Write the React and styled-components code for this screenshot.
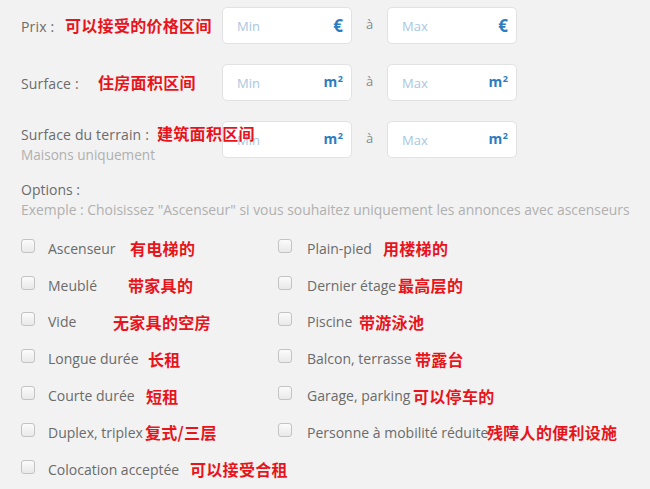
import React from 'react'
import styled, { createGlobalStyle } from 'styled-components'

const GlobalStyle = createGlobalStyle`
  html, body {
    margin: 0;
    background: #f2f2f2;
  }
  body {
    font-family: 'Open Sans', 'Noto Sans', sans-serif;
    color: #6b6b6b;
  }
`

const Form = styled.div`
  padding: 7px 0 0 21px;
  width: 629px;
  height: 482px;
  overflow: hidden;
`

const RangeList = styled.div`
  display: flex;
  flex-direction: column;
  row-gap: 20px;
`

const RangeRow = styled.div`
  display: flex;
  align-items: ${p => (p.$top ? 'flex-start' : 'center')};
  height: 37px;
`

const LabelBlock = styled.div`
  width: 201px;
  flex: none;
  margin-top: ${p => (p.$top ? '2px' : '0')};
  line-height: 20px;
`

const LabelLine = styled.div`
  display: flex;
  align-items: baseline;
  white-space: nowrap;
`

const LabelText = styled.span`
  display: inline-block;
  flex: none;
  width: ${p => p.$w}px;
  font-size: 14px;
  letter-spacing: 0.15px;
  color: #6b6b6b;
`

const Hint = styled.div`
  font-size: 13.6px;
  color: #b0b0b0;
  white-space: nowrap;
`

const Note = styled.span`
  position: relative;
  z-index: 1;
  flex: none;
  font-family: 'Noto Sans CJK SC', sans-serif;
  font-weight: 700;
  font-size: 16px;
  letter-spacing: 0.3px;
  color: #e8141c;
  white-space: nowrap;
`

const Field = styled.div`
  flex: none;
  align-self: center;
  display: flex;
  align-items: center;
  justify-content: space-between;
  padding: 0 8px 0 14px;
  box-sizing: border-box;
  width: 130px;
  height: 37px;
  background: #fff;
  border: 1px solid #e2e2e2;
  border-radius: 5px;
`

const Placeholder = styled.span`
  font-size: 13px;
  color: #a9c6e3;
`

const Unit = styled.span`
  font-weight: 700;
  font-size: ${p => (p.$euro ? '17px' : '14px')};
  color: #2b7cc0;
  margin-top: ${p => (p.$euro ? '-1px' : '-3px')};
  sup {
    font-size: 9px;
    vertical-align: 5px;
    margin-left: 0.5px;
  }
`

const Sep = styled.span`
  align-self: center;
  width: 35px;
  text-align: center;
  font-size: 13px;
  color: #8a8a8a;
  margin-top: -4px;
`

const OptionsHead = styled.div`
  margin-top: 21px;
  font-size: 14px;
  line-height: 21px;
  color: #6b6b6b;
`

const OptionsHint = styled.div`
  font-size: 13.9px;
  line-height: 20px;
  color: #b0b0b0;
  white-space: nowrap;
`

const OptionGrid = styled.div`
  margin-top: 10px;
  display: grid;
  grid-template-columns: 257px 257px;
  grid-auto-flow: column;
  grid-template-rows: repeat(7, 36.8px);
`

const Option = styled.label`
  display: flex;
  align-items: center;
  white-space: nowrap;
`

const Box = styled.span`
  width: 12px;
  height: 12px;
  flex: none;
  margin-top: -5px;
  border: 1px solid #c3c3c3;
  border-radius: 3px;
  background: linear-gradient(#fbfbfb, #e9e9e9);
  margin-right: ${p => (p.$right ? 15 : 13)}px;
`

const OptionText = styled.span`
  display: inline-block;
  flex: none;
  width: ${p => p.$w}px;
  font-size: 14px;
  color: #6b6b6b;
`

const ranges = [
  { label: 'Prix :', w: 44, note: '可以接受的价格区间', unit: 'eur' },
  { label: 'Surface :', w: 77, note: '住房面积区间', unit: 'm2' },
  { label: 'Surface du terrain :', w: 136, note: '建筑面积区间', unit: 'm2', hint: 'Maisons uniquement' },
]

const options = [
  ['Ascenseur', 82, '有电梯的'],
  ['Meublé', 80, '带家具的'],
  ['Vide', 65, '无家具的空房'],
  ['Longue durée', 100, '长租'],
  ['Courte durée', 98, '短租'],
  ['Duplex, triplex', 97, '复式/三层'],
  ['Colocation acceptée', 142, '可以接受合租'],
  ['Plain-pied', 76, '用楼梯的'],
  ['Dernier étage', 91, '最高层的'],
  ['Piscine', 52, '带游泳池'],
  ['Balcon, terrasse', 108, '带露台'],
  ['Garage, parking', 106, '可以停车的'],
  ['Personne à mobilité réduite', 180, '残障人的便利设施'],
]

const UnitMark = ({ unit }) =>
  unit === 'eur' ? <Unit $euro>€</Unit> : <Unit>m<sup>2</sup></Unit>

const App = () => (
  <Form>
    <GlobalStyle />
    <RangeList>
      {ranges.map(r => (
        <RangeRow key={r.label} $top={!!r.hint}>
          <LabelBlock $top={!!r.hint}>
            <LabelLine>
              <LabelText $w={r.w}>{r.label}</LabelText>
              <Note>{r.note}</Note>
            </LabelLine>
            {r.hint && <Hint>{r.hint}</Hint>}
          </LabelBlock>
          <Field>
            <Placeholder>Min</Placeholder>
            <UnitMark unit={r.unit} />
          </Field>
          <Sep>à</Sep>
          <Field>
            <Placeholder>Max</Placeholder>
            <UnitMark unit={r.unit} />
          </Field>
        </RangeRow>
      ))}
    </RangeList>

    <OptionsHead>Options :</OptionsHead>
    <OptionsHint>Exemple : Choisissez "Ascenseur" si vous souhaitez uniquement les annonces avec ascenseurs</OptionsHint>

    <OptionGrid>
      {options.map(([text, w, note], i) => (
        <Option key={text}>
          <Box $right={i >= 7} />
          <OptionText $w={w}>{text}</OptionText>
          <Note>{note}</Note>
        </Option>
      ))}
    </OptionGrid>
  </Form>
)

export default App
